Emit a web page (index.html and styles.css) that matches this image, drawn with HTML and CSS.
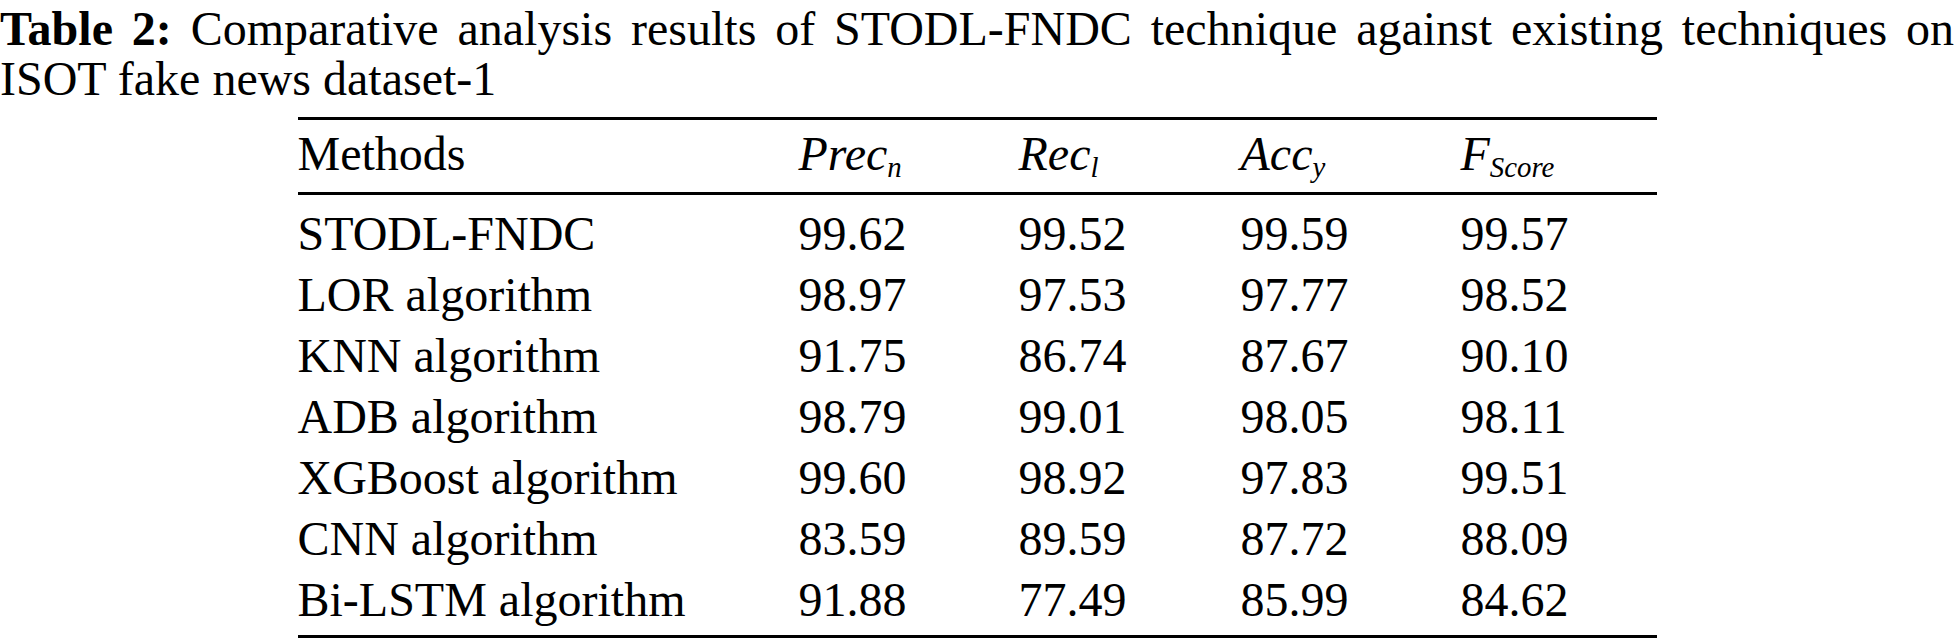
FILE: index.html
```html
<!DOCTYPE html>
<html lang="en">
<head>
<meta charset="utf-8">
<title>Table 2</title>
<link rel="stylesheet" href="styles.css">
</head>
<body>
<p class="caption"><b>Table 2:</b> <span class="cap-text">Comparative analysis results of STODL-FNDC technique against existing techniques on</span> <span class="cap-text">ISOT fake news dataset-1</span></p>
<table class="results">
  <colgroup>
    <col class="c-method">
    <col class="c-prec">
    <col class="c-rec">
    <col class="c-acc">
    <col class="c-f">
  </colgroup>
  <thead>
    <tr>
      <th>Methods</th>
      <th><i>Prec</i><sub>n</sub></th>
      <th><i>Rec</i><sub>l</sub></th>
      <th><i>Acc</i><sub>y</sub></th>
      <th><i>F</i><sub>Score</sub></th>
    </tr>
  </thead>
  <tbody>
    <tr><td>STODL-FNDC</td><td>99.62</td><td>99.52</td><td>99.59</td><td>99.57</td></tr>
    <tr><td>LOR algorithm</td><td>98.97</td><td>97.53</td><td>97.77</td><td>98.52</td></tr>
    <tr><td>KNN algorithm</td><td>91.75</td><td>86.74</td><td>87.67</td><td>90.10</td></tr>
    <tr><td>ADB algorithm</td><td>98.79</td><td>99.01</td><td>98.05</td><td>98.11</td></tr>
    <tr><td>XGBoost algorithm</td><td>99.60</td><td>98.92</td><td>97.83</td><td>99.51</td></tr>
    <tr><td>CNN algorithm</td><td>83.59</td><td>89.59</td><td>87.72</td><td>88.09</td></tr>
    <tr><td>Bi-LSTM algorithm</td><td>91.88</td><td>77.49</td><td>85.99</td><td>84.62</td></tr>
  </tbody>
</table>
</body>
</html>
```
FILE: styles.css
```css
html, body {
  margin: 0;
  padding: 0;
  background: #fff;
}
body {
  font-family: "Liberation Serif", "Times New Roman", serif;
  font-size: 48px;
  color: #000;
}
.caption {
  margin: 0;
  padding-top: 4px;
  line-height: 50px;
  text-align: justify;
}
.caption b {
  font-weight: bold;
}
.results {
  width: 1359px;
  margin: 13px auto 0;
  border-collapse: separate;
  border-spacing: 0;
  border-top: 3px solid #000;
  border-bottom: 3px solid #000;
  table-layout: fixed;
}
.c-method { width: 501px; }
.c-prec { width: 220px; }
.c-rec { width: 222px; }
.c-acc { width: 220px; }
.c-f { width: 196px; }
.results th,
.results td {
  padding: 0;
  text-align: left;
  font-weight: normal;
  line-height: 61px;
  white-space: nowrap;
  vertical-align: baseline;
}
.results thead th {
  padding-top: 4px;
  padding-bottom: 8px;
  line-height: 60px;
  border-bottom: 3px solid #000;
}
.results i {
  font-style: italic;
}
.results sub {
  font-size: 0.6em;
  font-style: italic;
  line-height: 0;
  vertical-align: -7px;
}
.results tbody tr:first-child td {
  padding-top: 8px;
}
.results tbody tr:last-child td {
  padding-bottom: 5px;
}
```
